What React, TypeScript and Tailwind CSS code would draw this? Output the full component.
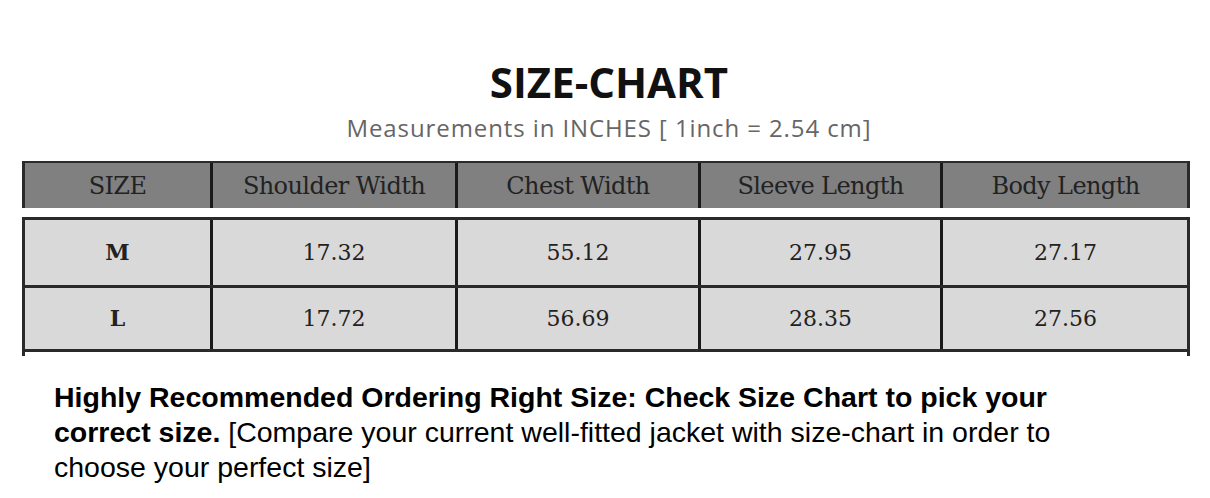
const headers = ["SIZE", "Shoulder Width", "Chest Width", "Sleeve Length", "Body Length"];
const rows = [
  ["M", "17.32", "55.12", "27.95", "27.17"],
  ["L", "17.72", "56.69", "28.35", "27.56"],
];

const cols = "grid grid-cols-[185px_245px_243px_242px_248px]";

export default function App() {
  return (
    <div className="w-[1210px] h-[498px] bg-white overflow-hidden">
      <div className="flex flex-col items-center pt-[57px] pl-[8px]">
        <h1 className="font-['Open_Sans',sans-serif] font-bold text-[42px] leading-[50px] text-[#111]">
          SIZE-CHART
        </h1>
        <p className="font-['Open_Sans',sans-serif] text-[24px] leading-[30px] tracking-[0.9px] text-[#666] mt-[6px]">
          Measurements in INCHES [ 1inch = 2.54 cm]
        </p>
      </div>

      <div className="ml-[22px] w-[1168px] mt-[18px] font-['DejaVu_Serif',serif] text-[#222]">
        <div className={`${cols} bg-[#808080] border-t-2 border-x-[3px] border-[#2a2a2a] h-[47px]`}>
          {headers.map((h, i) => (
            <div
              key={h}
              className={`flex items-center justify-center text-[24px] tracking-[-0.6px] ${i > 0 ? "border-l-[3px] border-[#1a1a1a]" : ""}`}
            >
              {h}
            </div>
          ))}
        </div>

        <div className="mt-[9px] border-t-[3px] border-x-[3px] border-[#2a2a2a] bg-[#d9d9d9]">
          {rows.map((r, ri) => (
            <div
              key={r[0]}
              className={`${cols} border-b-[3px] border-[#2a2a2a] ${ri === 0 ? "h-[68px]" : "h-[64px]"}`}
            >
              {r.map((c, i) => (
                <div
                  key={i}
                  className={`flex items-center justify-center text-[22px] ${i === 0 ? "font-bold" : ""} ${i > 0 ? "border-l-[3px] border-[#1a1a1a]" : ""}`}
                >
                  {c}
                </div>
              ))}
            </div>
          ))}
        </div>
        <div className="h-[4px] border-x-[3px] border-[#2a2a2a]" />
      </div>

      <p className="ml-[54px] mt-[24px] w-[1062px] font-['Liberation_Sans',sans-serif] text-[28.5px] leading-[35px] text-black">
        <span className="font-bold">
          Highly Recommended Ordering Right Size: Check Size Chart to pick your correct size.
        </span>{" "}
        [Compare your current well-fitted jacket with size-chart in order to choose your perfect size]
      </p>
    </div>
  );
}
